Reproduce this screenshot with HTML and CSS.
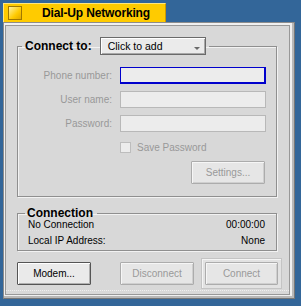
FILE: index.html
```html
<!DOCTYPE html>
<html lang="en">
<head>
    <meta charset="UTF-8">
    <title>Dial-Up Networking</title>
    <link rel="stylesheet" href="styles.css">
</head>
<body>
    <div class="window">
        <div class="tab">
            <span class="close-box"></span>
            <span class="title">Dial-Up Networking</span>
        </div>
        <div class="frame">
            <div class="content">
                <fieldset class="group connect-group">
                    <legend>
                        <span class="legend-label">Connect to:</span>
                        <span class="dropdown">Click to add<span class="arrow"></span></span>
                    </legend>
                    <div class="fields">
                        <label>Phone number:</label>
                        <span class="input focused"></span>
                        <label>User name:</label>
                        <span class="input"></span>
                        <label>Password:</label>
                        <span class="input"></span>
                    </div>
                    <div class="check-row">
                        <span class="checkbox"></span>
                        <span>Save Password</span>
                    </div>
                    <div class="settings-row">
                        <button class="btn" disabled>Settings...</button>
                    </div>
                </fieldset>
                <fieldset class="group connection-group">
                    <legend>Connection</legend>
                    <div class="status-row"><span>No Connection</span><span>00:00:00</span></div>
                    <div class="status-row"><span>Local IP Address:</span><span>None</span></div>
                </fieldset>
                <div class="button-bar">
                    <button class="btn modem-btn">Modem...</button>
                    <button class="btn" disabled>Disconnect</button>
                    <span class="default-frame"><button class="btn" disabled>Connect</button></span>
                </div>
            </div>
        </div>
    </div>
</body>
</html>
```

FILE: styles.css
```css
body {
    margin: 0;
    background-color: #336699;
    font-family: "Liberation Sans", Arial, sans-serif;
    font-size: 10px;
    color: #000;
}
.window {
    width: 292px;
    margin: 3px 0 0 3px;
}
.tab {
    width: 163px;
    height: 19px;
    box-sizing: border-box;
    background-color: #ffcb00;
    border-top: 1px solid #ffe680;
    border-left: 1px solid #ffe680;
    border-right: 1px solid #cc9900;
    display: flex;
    align-items: center;
}
.close-box {
    width: 12px;
    height: 12px;
    margin-left: 4px;
    border: 1px solid #a07800;
    background: linear-gradient(135deg, #fff2a0, #ffcb00 60%, #e0a800);
}
.title {
    margin-left: 20px;
    font-size: 12px;
    font-weight: bold;
    letter-spacing: -0.15px;
}
.frame {
    height: 277px;
    box-sizing: border-box;
    border: 1px solid #8c8c8c;
    border-right-color: #777;
    border-bottom-color: #777;
    background-color: #f0f0f0;
    padding: 2px 4px 3px 1px;
    box-shadow: inset -2px -2px 0 #b8b8b8;
}
.content {
    height: 100%;
    box-sizing: border-box;
    border: 1px solid #989898;
    background-color: #d8d8d8;
    padding: 11px 0 0 11px;
    position: relative;
}
.content::after {
    content: "";
    position: absolute;
    left: 0;
    right: 0;
    bottom: 3px;
    border-bottom: 1px dotted #efefef;
}
.group {
    margin: 0;
    width: 260px;
    box-sizing: border-box;
    border: 1px solid #8f8f8f;
    box-shadow: inset 1px 1px 0 #f2f2f2, 1px 1px 0 #f2f2f2;
    min-inline-size: 0;
}
.connect-group {
    padding: 12px 10px 12px 0;
}
.connect-group legend {
    padding: 0 3px 0 3px;
    margin-left: 4px;
    display: flex;
    align-items: center;
}
.legend-label {
    font-size: 12px;
    font-weight: bold;
    margin-right: 8px;
}
.dropdown {
    width: 106px;
    height: 18px;
    box-sizing: border-box;
    border: 1px solid #6a6a6a;
    background-color: #ebebeb;
    box-shadow: inset 1px 1px 0 #fff, inset -1px -1px 0 #a8a8a8;
    font-size: 10.5px;
    padding-left: 7px;
    display: flex;
    align-items: center;
    position: relative;
}
.arrow {
    position: absolute;
    right: 5px;
    top: 9px;
    border-left: 3px solid transparent;
    border-right: 3px solid transparent;
    border-top: 3px solid #6a6a6a;
}
.fields {
    display: grid;
    grid-template-columns: 94px 146px;
    column-gap: 8px;
    row-gap: 7px;
    align-items: center;
}
.fields label {
    text-align: right;
    color: #999;
}
.input {
    height: 17px;
    box-sizing: border-box;
    border: 1px solid #b8b8b8;
    background-color: #ececec;
}
.input.focused {
    border: 2px solid #0000cc;
    border-width: 1px 2px 2px 1px;
}
.check-row {
    display: flex;
    align-items: center;
    margin: 10px 0 0 102px;
    color: #999;
}
.checkbox {
    width: 11px;
    height: 11px;
    box-sizing: border-box;
    border: 1px solid #bdbdbd;
    background-color: #ececec;
    margin-right: 6px;
}
.settings-row {
    display: flex;
    justify-content: flex-end;
    margin: 8px 1px 0 0;
}
.btn {
    flex: none;
    width: 74px;
    height: 23px;
    box-sizing: border-box;
    border: 1px solid #555;
    border-radius: 1px;
    background-color: #eaeaea;
    box-shadow: inset 1px 1px 0 #fff, inset -1px -1px 0 #b0b0b0;
    font-family: "Liberation Sans", Arial, sans-serif;
    font-size: 10px;
    color: #000;
    padding: 0;
}
.btn:disabled {
    border-color: #acacac;
    color: #999;
    background-color: #e6e6e6;
    box-shadow: inset 1px 1px 0 #f6f6f6, inset -1px -1px 0 #cfcfcf;
}
.connection-group {
    margin-top: 9px;
    padding: 0 11px 2px 10px;
}
.connection-group legend {
    font-size: 12px;
    font-weight: bold;
    padding: 0 4px 0 2px;
    margin-left: -3px;
    line-height: 14px;
}
.status-row {
    display: flex;
    justify-content: space-between;
    height: 16px;
    align-items: center;
}
.status-row:first-of-type {
    margin-top: -4px;
}
.button-bar {
    display: flex;
    align-items: center;
    margin-top: 7px;
}
.modem-btn {
    margin-right: 29px;
}
.default-frame {
    flex: none;
    margin-left: 7px;
    padding: 3px;
    border: 1px solid #c4c4c4;
    background-color: #e2e2e2;
    box-shadow: inset 1px 1px 0 #f4f4f4;
    display: flex;
}
.default-frame .btn {
    width: 73px;
}
```
